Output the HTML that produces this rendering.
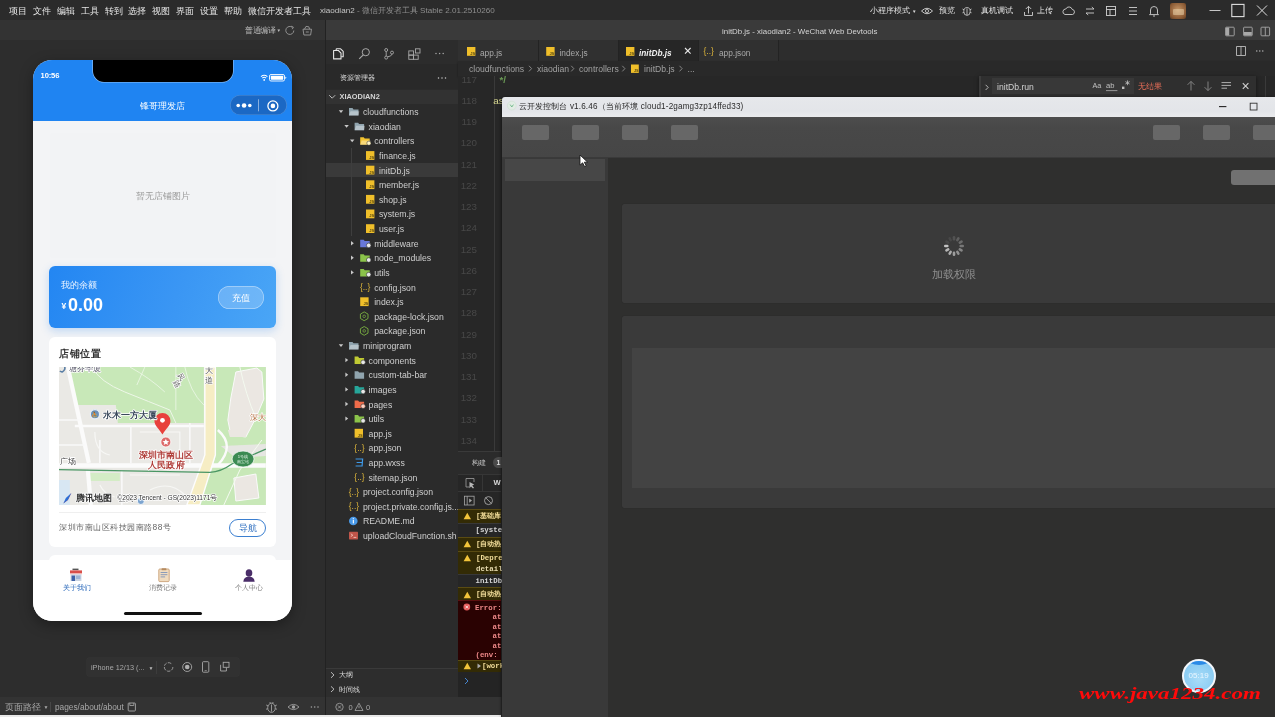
<!DOCTYPE html>
<html><head><meta charset="utf-8">
<style>
*{box-sizing:border-box;margin:0;padding:0}
html,body{width:1275px;height:717px;overflow:hidden;background:#2c2c2c;font-family:"Liberation Sans",sans-serif;color:#ccc}
.a{position:absolute}
.t{position:absolute;white-space:nowrap;line-height:12px}
svg{position:absolute;overflow:visible}
.m{position:absolute;white-space:nowrap;line-height:12px;font-family:"Liberation Mono",monospace;font-weight:bold;font-size:7.4px}
</style></head><body><div style="position:absolute;left:0;top:0;width:1275px;height:717px;overflow:hidden;will-change:transform">
<!-- MENU BAR -->
<div class="a" style="left:0;top:0;width:1275px;height:20px;background:#2b2b2b"></div>
<div class="t" style="left:9px;top:5px;font-size:9px;color:#e6e6e6;word-spacing:0">
<span style="margin-right:6px">项目</span><span style="margin-right:6px">文件</span><span style="margin-right:6px">编辑</span><span style="margin-right:6px">工具</span><span style="margin-right:5px">转到</span><span style="margin-right:6px">选择</span><span style="margin-right:6px">视图</span><span style="margin-right:6px">界面</span><span style="margin-right:6px">设置</span><span style="margin-right:6px">帮助</span><span>微信开发者工具</span></div>
<div class="t" style="left:320px;top:5px;font-size:8.1px;color:#8e8e8e"><span style="color:#c4c4c4">xiaodian2</span> - 微信开发者工具 Stable 2.01.2510260</div>

<!-- SIMULATOR PANEL -->
<div id="sim" class="a" style="left:0;top:20px;width:325px;height:695px;background:#2d2d2d"></div>
<div class="a" style="left:0;top:20px;width:325px;height:20px;background:#333"></div>
<div class="t" style="left:245px;top:25px;font-size:7.5px;color:#bbb;letter-spacing:-0.5px">普通编译</div><div class="t" style="left:276.5px;top:25px;font-size:4.5px;color:#bbb">▼</div>
<div class="a" style="left:325px;top:20px;width:1px;height:695px;background:#222"></div>
<div class="a" style="left:0;top:697px;width:325px;height:18px;background:#333"></div>
<div class="a" style="left:0;top:715px;width:501px;height:2px;background:#e9e9e9"></div>



<!-- sim toolbar icons -->
<svg style="left:284px;top:24px" width="30" height="13" viewBox="0 0 30 13">
 <path d="M9.8,6.5 A4,4 0 1 1 8.4,3.4" stroke="#9a9a9a" stroke-width="0.9" fill="none"/>
 <path d="M7.2,2.2 L9.4,3.2 L8.2,5.2" stroke="#9a9a9a" stroke-width="0.9" fill="none"/>
 <path d="M19,5.2 L27.5,5.2 L26.6,11 L19.9,11 Z M20.5,5.2 L22,2.4 L24.8,2.8 L25.6,5.2 M21.8,8 L24.8,8" stroke="#9a9a9a" stroke-width="0.9" fill="none"/>
</svg>
<!-- device pill -->
<div class="a" style="left:86.5px;top:658.4px;width:152px;height:17.5px;border-radius:2px;background:#313131;box-shadow:0 0 0 0.5px #363636"></div>
<div class="t" style="left:91px;top:662px;font-size:7.3px;line-height:12px;color:#a8a8a8">iPhone 12/13 (...</div>
<div class="t" style="left:148.5px;top:662px;font-size:5px;line-height:12px;color:#bbb">▼</div>
<div class="a" style="left:155.5px;top:661px;width:0.8px;height:13px;background:#3c3c3c"></div>
<svg style="left:160px;top:659px" width="75" height="16" viewBox="0 0 75 16">
 <path d="M12.9,8 A4.3,4.3 0 1 1 11.6,4.9" stroke="#a0a0a0" stroke-width="0.9" fill="none" stroke-dasharray="3.5 1.2"/>
 <circle cx="27.2" cy="8" r="4.5" stroke="#a8a8a8" stroke-width="0.9" fill="none"/>
 <circle cx="27.2" cy="8" r="2.3" fill="#b0b0b0"/>
 <rect x="42.5" y="2.7" width="6.3" height="10.5" rx="0.9" stroke="#a8a8a8" stroke-width="0.9" fill="none"/>
 <path d="M44.6,11.6 L46.8,11.6" stroke="#a8a8a8" stroke-width="0.7"/>
 <rect x="63.2" y="3.3" width="5.8" height="5" stroke="#a8a8a8" stroke-width="0.9" fill="none"/>
 <path d="M60.6,5.8 L60.6,12 L66.4,12 L66.4,8.6" stroke="#a8a8a8" stroke-width="0.9" fill="none"/>
</svg>
<!-- page path -->
<div class="t" style="left:5px;top:701px;font-size:8.5px;line-height:12px;color:#a8a8a8">页面路径 <span style="font-size:5px;position:relative;top:-1px">▼</span></div>
<div class="a" style="left:50px;top:702px;width:0.8px;height:10px;background:#484848"></div>
<div class="t" style="left:55px;top:701px;font-size:8.3px;line-height:12px;color:#a8a8a8">pages/about/about</div>
<svg style="left:127px;top:702px" width="10" height="10" viewBox="0 0 10 10"><rect x="1.2" y="1" width="7.2" height="8" rx="0.8" stroke="#a8a8a8" stroke-width="0.9" fill="none"/><path d="M2.8,1 L2.8,3.5 L6.8,3.5 L6.8,1" stroke="#a8a8a8" stroke-width="0.8" fill="none"/></svg>
<svg style="left:264px;top:700px" width="60" height="14" viewBox="0 0 60 14">
 <path d="M7.5,3.2 A3.8,4.6 0 0 1 11.3,7.8 A3.8,4.6 0 0 1 3.7,7.8 A3.8,4.6 0 0 1 7.5,3.2 Z M7.5,4.5 L7.5,11.6 M2.2,5 L4.2,6 M12.8,5 L10.8,6 M2,9.2 L3.9,8.8 M13,9.2 L11.1,8.8 M5.8,2 L6.5,3.3 M9.2,2 L8.5,3.3" stroke="#a0a0a0" stroke-width="0.9" fill="none"/>
 <path d="M24,7 Q29.5,1.8 35,7 Q29.5,12.2 24,7 Z" stroke="#a0a0a0" stroke-width="0.9" fill="none"/>
 <circle cx="29.5" cy="7" r="1.7" fill="#a0a0a0"/>
 <circle cx="47.4" cy="7" r="0.8" fill="#a0a0a0"/><circle cx="50.7" cy="7" r="0.8" fill="#a0a0a0"/><circle cx="54" cy="7" r="0.8" fill="#a0a0a0"/>
</svg>

<!-- PHONE -->
<div class="a" style="left:33px;top:60px;width:259px;height:561px;border-radius:19px;background:#f3f4f6;overflow:hidden;box-shadow:0 4px 14px rgba(0,0,0,0.35)">
 <div class="a" style="left:0;top:0;width:259px;height:60.5px;background:#1f84f2"></div>
 <div class="a" style="left:59.5px;top:-2px;width:140px;height:23.5px;background:#000;border-radius:0 0 11px 11px;box-shadow:0 0 0 0.6px rgba(255,255,255,0.5)"></div>
 <div class="t" style="left:7.6px;top:10.2px;font-size:7.6px;line-height:12px;color:#fff;font-weight:bold;letter-spacing:-0.15px">10:56</div>
 <svg style="left:227px;top:13.5px" width="30" height="8" viewBox="0 0 30 8">
  <path d="M1 2.6 Q4.2 0 7.4 2.6" stroke="#fff" stroke-width="1.1" fill="none"/>
  <path d="M2.3 4.1 Q4.2 2.4 6.1 4.1" stroke="#fff" stroke-width="1.1" fill="none"/>
  <circle cx="4.2" cy="5.9" r="0.9" fill="#fff"/>
  <rect x="9.5" y="0.5" width="15" height="6.5" rx="1.5" fill="none" stroke="#fff" stroke-width="0.9"/>
  <rect x="10.8" y="1.8" width="12.4" height="3.9" rx="0.6" fill="#fff"/>
  <path d="M25.3 2.4 L26.6 3.75 L25.3 5.1 Z" fill="#fff"/>
 </svg>
 <div class="t" style="left:0;top:40px;width:259px;text-align:center;font-size:8.8px;line-height:12px;color:#fff">锋哥理发店</div>
 <div class="a" style="left:197.4px;top:34.5px;width:56.7px;height:20.4px;border-radius:10.2px;background:#1b68c4;box-shadow:inset 0 0 0 0.6px rgba(255,255,255,0.25)"></div>
 <svg style="left:197.4px;top:34.5px" width="57" height="21" viewBox="0 0 57 21">
  <circle cx="8.2" cy="10.5" r="1.8" fill="#fff"/><circle cx="14.1" cy="10.5" r="2.3" fill="#fff"/><circle cx="19.8" cy="10.5" r="1.8" fill="#fff"/>
  <rect x="28.1" y="4.3" width="0.8" height="12" fill="rgba(255,255,255,0.6)"/>
  <circle cx="42.9" cy="10.9" r="5" fill="none" stroke="#fff" stroke-width="1.3"/>
  <circle cx="42.9" cy="10.9" r="2.3" fill="#fff"/>
 </svg>
 <!-- content -->
 <div class="a" style="left:17px;top:72.5px;width:226px;height:125px;background:#f2f3f5;border-radius:2px"></div>
 <div class="t" style="left:17px;top:130px;width:226px;text-align:center;font-size:8.5px;line-height:12px;color:#9a9a9a">暂无店铺图片</div>
 <div class="a" style="left:16px;top:206px;width:227px;height:62px;border-radius:6px;background:linear-gradient(110deg,#2386f2 0%,#3a96f4 55%,#4aa6f6 100%);box-shadow:0 3px 8px rgba(40,130,240,0.25)"></div>
 <div class="t" style="left:28px;top:219px;font-size:8.5px;line-height:12px;color:#eaf3ff">我的余额</div>
 <div class="t" style="left:28.5px;top:237px;font-size:8.5px;line-height:18px;color:#fff;font-weight:bold">¥</div>
 <div class="t" style="left:35px;top:235px;font-size:18px;line-height:20px;color:#fff;font-weight:bold">0.00</div>
 <div class="a" style="left:185px;top:226px;width:46px;height:23px;border-radius:11.5px;background:rgba(255,255,255,0.22);box-shadow:inset 0 0 0 0.7px rgba(255,255,255,0.45)"></div>
 <div class="t" style="left:185px;top:231.5px;width:46px;text-align:center;font-size:9px;line-height:12px;color:#fff">充值</div>
 <!-- map card -->
 <div class="a" style="left:16px;top:276.5px;width:227px;height:210.5px;border-radius:6px;background:#fff"></div>
 <div class="t" style="left:26px;top:287px;font-size:10.2px;line-height:14px;color:#333;font-weight:bold;letter-spacing:0.6px">店铺位置</div>
 <div id="map" class="a" style="left:26.3px;top:307px;width:206.7px;height:138px;background:#e9e9e7;overflow:hidden"><svg style="left:0;top:0" width="207" height="138" viewBox="59.3 367 206.7 138">
<rect x="59" y="367" width="208" height="139" fill="#eae9e5"/>
<path d="M70,367 L204,367 L204,423 L118,423 L116,405 L75,405 Z" fill="#c8e8b8"/>
<path d="M216,367 L266,367 L266,505 L196,505 L212,470 L216,455 Z" fill="#c8e8b8"/>
<path d="M90,473 L120,473 L120,481 L90,481 Z" fill="#d4ecc6"/>
<path d="M59,480 L70,480 L70,505 L59,505 Z" fill="#d8e7f3"/>
<path d="M236,372 L257,368 L262,372 L264,399 L256,418 L246,437 L231,435 L228,420 L231,398 Z" fill="#ebe7e2" stroke="#fafafa" stroke-width="1"/>
<path d="M234,478 L256,474 L259,498 L236,501 Z" fill="#ebe7e2" stroke="#fafafa" stroke-width="1"/>
<path d="M228,430 L246,429 L246,437 L230,437 Z" fill="#ebe7e2"/>
<path d="M221,446 L266,444 L266,456 L236,458 Z" fill="#e6e6e2"/>
<!-- park paths -->
<path d="M92,367 Q100,382 125,392 Q150,402 170,410 L176,423" stroke="#eef7e8" stroke-width="1" fill="none"/>
<path d="M130,367 Q150,378 165,392 M176,367 L176,410 M145,367 L137,385 M185,367 Q190,392 204,405" stroke="#eef7e8" stroke-width="0.8" fill="none"/>
<path d="M240,367 Q246,395 256,418 M224,505 L240,470 L262,440" stroke="#f4faf0" stroke-width="1" fill="none"/>
<!-- roads -->
<path d="M68,367 L89,463 M88,470 L91,505" stroke="#fbfbfb" stroke-width="4.2" fill="none"/>
<path d="M75,426 L204,426" stroke="#fbfbfb" stroke-width="2.6" fill="none"/>
<path d="M59,465.5 L266,465.5" stroke="#fbfbfb" stroke-width="4.5" fill="none"/>
<path d="M131,426 L131,463 M190,423 L190,463 M122,470 L122,505 M100,440 L100,463 M59,445 L85,445 M59,420 L80,420" stroke="#f9f9f9" stroke-width="1.6" fill="none"/>
<path d="M95,432 Q95,452 110,455 M140,432 L180,432 L180,455 M100,485 Q105,495 115,497 M130,475 L180,475 M150,490 Q170,480 185,495" stroke="#f7f7f5" stroke-width="1.2" fill="none"/>
<path d="M218,430 Q236,446 218,465" stroke="#fbfbfb" stroke-width="2.4" fill="none"/>
<path d="M205,367 L215.5,367 L215.5,455 L200,505 L187,505 L205,455 Z" fill="#f6edc4" stroke="#fdfdfd" stroke-width="1.4"/>
<!-- subway -->
<path d="M59,469.7 L210,472.3 Q221,472 232,464 L266,449" stroke="#4a9664" stroke-width="1.3" fill="none"/>
<ellipse cx="243.2" cy="459" rx="11" ry="8" fill="#3b8a52" stroke="#fff" stroke-width="0.7"/>
<text x="243.2" y="457.5" font-size="4.2" fill="#e8f5ea" text-anchor="middle" font-family="Liberation Sans">1号线</text>
<text x="243.2" y="463" font-size="4.2" fill="#e8f5ea" text-anchor="middle" font-family="Liberation Sans">南宝站</text>
<!-- pin & poi -->
<circle cx="166" cy="442" r="5" fill="#dc6a6a" stroke="#fff" stroke-width="0.8"/>
<path d="M166,438.8 L167,441 L169.3,441.2 L167.5,442.7 L168.1,445 L166,443.7 L163.9,445 L164.5,442.7 L162.7,441.2 L165,441 Z" fill="#fff"/>
<path d="M162.6,434.5 C159,428.5 154.6,425.5 154.6,421 A8,8 0 0 1 170.6,421 C170.6,425.5 166.2,428.5 162.6,434.5 Z" fill="#e8413c"/>
<circle cx="162.6" cy="420.3" r="2.4" fill="#fff"/>
<g font-family="Liberation Sans" paint-order="stroke" stroke="#fff" stroke-width="1.6" stroke-linejoin="round">
<text x="166" y="457.8" font-size="9.4" font-weight="bold" fill="#b03e3a" text-anchor="middle">深圳市南山区</text>
<text x="166.4" y="468" font-size="9.2" font-weight="bold" fill="#b03e3a" text-anchor="middle" letter-spacing="0.3">人民政府</text>
<text x="103" y="417.6" font-size="8.9" font-weight="bold" fill="#3b4a5c">水木一方大厦</text>
<text x="60" y="464.4" font-size="8.2" fill="#454545">广场</text>
<text x="250.5" y="419.6" font-size="7.8" fill="#b36d3d">深大</text>
<text x="205" y="372.8" font-size="7.6" fill="#555">大</text>
<text x="205" y="382.7" font-size="7.6" fill="#555">道</text>
<text x="69" y="370.5" font-size="7.6" fill="#556">塘芬华厦</text>
<text x="0" y="0" font-size="7.4" fill="#666" transform="translate(177,375) rotate(62)">风</text>
<text x="0" y="0" font-size="7.4" fill="#666" transform="translate(173,382) rotate(62)">路</text>
<text x="118" y="501" font-size="8" fill="#444">公寓</text>
</g>
<circle cx="95.1" cy="414.2" r="4.6" fill="#6a8fb8" stroke="#e8f0f8" stroke-width="1.2"/>
<text x="95.1" y="416.6" font-size="6" fill="#fff" text-anchor="middle" font-family="Liberation Sans">⛹</text>
<path d="M60,371 Q63,373.5 65,369 L65,367" stroke="#5b7fa5" stroke-width="1.6" fill="none"/>
<circle cx="141" cy="501" r="3.5" fill="#7ca4cf" stroke="#fff" stroke-width="0.8"/>
<!-- logo -->
<path d="M63.5,503.5 L71.5,493 L68,500 Z" fill="#e8403c"/>
<path d="M63.5,503.5 L68,500 L71.5,493 L66,498 Z" fill="#2b6fd6"/>
<g font-family="Liberation Sans" paint-order="stroke" stroke="#fff" stroke-width="1.6" stroke-linejoin="round">
<text x="75.7" y="500.6" font-size="9.4" font-weight="bold" fill="#333">腾讯地图</text>
<text x="117.5" y="500" font-size="6.6" fill="#333">©2023 Tencent - GS(2023)1171号</text>
</g>
</svg></div>
 <div class="a" style="left:26px;top:452px;width:207px;height:1px;background:#efefef"></div>
 <div class="t" style="left:26px;top:461px;font-size:8.4px;line-height:12px;color:#666;letter-spacing:0.5px">深圳市南山区科技园南路88号</div>
 <div class="a" style="left:196px;top:459px;width:37px;height:18px;border-radius:9px;border:1px solid #3b7fd0"></div>
 <div class="t" style="left:196px;top:462px;width:37px;text-align:center;font-size:8.8px;line-height:12px;color:#2f6fc0">导航</div>
 <div class="a" style="left:16px;top:495px;width:227px;height:30px;border-radius:6px;background:#fff"></div>
 <!-- tabbar -->
 <div class="a" style="left:0;top:500px;width:259px;height:61px;background:#fff"></div>
 <div class="t" style="left:13.5px;top:522.4px;width:60px;text-align:center;font-size:7.4px;line-height:12px;color:#2f6cbc">关于我们</div>
 <div class="t" style="left:99.7px;top:522.4px;width:60px;text-align:center;font-size:7.4px;line-height:12px;color:#7a7a7a">消费记录</div>
 <div class="t" style="left:186px;top:522.4px;width:60px;text-align:center;font-size:7.4px;line-height:12px;color:#7a7a7a">个人中心</div>
 <svg style="left:36px;top:508px" width="14" height="14" viewBox="0 0 14 14">
  <rect x="3.5" y="0.6" width="6" height="1.6" fill="#555"/>
  <rect x="1" y="2.4" width="12" height="3" fill="#d94f4a"/>
  <rect x="1.2" y="5.4" width="11.6" height="1" fill="#f3b0ad"/>
  <rect x="1.6" y="6.4" width="10.8" height="6.6" fill="#c9d3e2"/>
  <rect x="2.6" y="7.6" width="3.4" height="5.4" fill="#3f62a8"/>
  <rect x="7" y="7.6" width="4.4" height="3.4" fill="#9fb4d6"/>
 </svg>
 <svg style="left:124.6px;top:508.4px" width="12" height="14" viewBox="0 0 12 14">
  <rect x="0.8" y="1" width="10.4" height="12.6" rx="1" fill="#f0dcc0" stroke="#c9a077" stroke-width="0.9"/>
  <rect x="3.6" y="0.2" width="4.8" height="2" rx="0.5" fill="#b58a60"/>
  <rect x="2.6" y="4" width="6.8" height="1" fill="#8a9bb8"/>
  <rect x="2.6" y="6.2" width="6.8" height="1" fill="#8a9bb8"/>
  <rect x="2.6" y="8.4" width="4.5" height="1" fill="#8a9bb8"/>
 </svg>
 <svg style="left:210px;top:509px" width="12" height="13" viewBox="0 0 12 13">
  <ellipse cx="6" cy="4" rx="3.3" ry="3.8" fill="#4a2d68"/>
  <path d="M0.3,12.8 Q0.8,7.6 6,7.8 Q11.2,7.6 11.7,12.8 Z" fill="#4a2d68"/>
 </svg>
 <div class="a" style="left:91px;top:551.5px;width:78px;height:3px;border-radius:2px;background:#111"></div>
</div>

<!-- RIGHT COLUMN -->
<div class="a" style="left:326px;top:20px;width:949px;height:20px;background:#3a3a3a"></div>
<div class="t" style="left:722px;top:26.2px;font-size:7.9px;color:#d4d4d4">initDb.js - xiaodian2 - WeChat Web Devtools</div>
<!-- explorer -->
<div class="a" style="left:326px;top:40px;width:132px;height:657px;background:#2b2b2b"></div>
<!-- top right toolbar -->
<div class="t" style="left:870px;top:5px;font-size:8.1px;color:#e0e0e0">小程序模式</div><div class="t" style="left:912px;top:5.5px;font-size:4.5px;color:#ddd">▼</div>
<div class="t" style="left:939px;top:5px;font-size:8.1px;color:#e0e0e0">预览</div>
<div class="t" style="left:981px;top:5px;font-size:8.1px;color:#e0e0e0">真机调试</div>
<div class="t" style="left:1037px;top:5px;font-size:8.1px;color:#e0e0e0">上传</div>
<svg style="left:0;top:0" width="1275" height="40">
 <path d="M921.5,11 Q927,5.5 932.5,11 Q927,16.5 921.5,11 Z" stroke="#d8d8d8" stroke-width="0.9" fill="none"/><circle cx="927" cy="11" r="1.6" stroke="#d8d8d8" stroke-width="0.8" fill="none"/>
 <path d="M967,7.6 A3.2,3.8 0 0 1 970.2,11.6 A3.2,3.8 0 0 1 963.8,11.6 A3.2,3.8 0 0 1 967,7.6 Z M967,8.6 L967,15 M962.5,9 L964,9.8 M971.5,9 L970,9.8 M962.5,12.8 L963.8,12.4 M971.5,12.8 L970.2,12.4" stroke="#d8d8d8" stroke-width="0.8" fill="none"/>
 <path d="M1028.5,6.5 L1028.5,13.5 M1025.8,9 L1028.5,6.3 L1031.2,9 M1024.5,12 L1024.5,15.5 L1032.5,15.5 L1032.5,12" stroke="#d8d8d8" stroke-width="0.85" fill="none"/>
 <path d="M1065,14.5 L1072.5,14.5 A2.6,2.6 0 0 0 1072.2,9.4 A3.4,3.4 0 0 0 1065.8,9 A2.8,2.8 0 0 0 1065,14.5 Z" stroke="#d0d0d0" stroke-width="0.9" fill="none"/>
 <path d="M1086,9 L1094,9 M1091.8,7 L1094,9 M1094,13 L1086,13 M1088.2,15 L1086,13" stroke="#d0d0d0" stroke-width="0.9" fill="none"/>
 <rect x="1106.5" y="6.5" width="9" height="9" stroke="#d0d0d0" stroke-width="0.9" fill="none"/><path d="M1106.5,9.5 L1115.5,9.5 M1110,9.5 L1110,15.5" stroke="#d0d0d0" stroke-width="0.9"/>
 <path d="M1129,7.5 L1137,7.5 M1129,11 L1137,11 M1129,14.5 L1137,14.5" stroke="#d0d0d0" stroke-width="0.9"/>
 <path d="M1150.5,13.8 L1150.5,10 A3.5,3.5 0 0 1 1157.5,10 L1157.5,13.8 L1158.5,14.6 L1149.5,14.6 Z M1153,16 L1155,16" stroke="#d0d0d0" stroke-width="0.9" fill="none"/>
 <path d="M1209.5,10.5 L1220.5,10.5" stroke="#d8d8d8" stroke-width="0.9"/>
 <rect x="1231.8" y="4.4" width="12.2" height="12.2" stroke="#e0e0e0" stroke-width="1.1" fill="none"/>
 <path d="M1257,5.5 L1267,15.5 M1267,5.5 L1257,15.5" stroke="#e0e0e0" stroke-width="1"/>
 <rect x="1225.6" y="27.2" width="8.6" height="8.6" rx="0.8" stroke="#a8a8a8" stroke-width="0.9" fill="none"/><rect x="1226" y="27.6" width="3.2" height="7.8" fill="#a8a8a8"/>
 <rect x="1243.6" y="27.2" width="8.6" height="8.6" rx="0.8" stroke="#a8a8a8" stroke-width="0.9" fill="none"/><rect x="1244" y="32" width="7.8" height="3.4" fill="#a8a8a8"/>
 <rect x="1261" y="27.2" width="8.6" height="8.6" rx="0.8" stroke="#a8a8a8" stroke-width="0.9" fill="none"/><path d="M1265.3,27.2 L1265.3,35.8" stroke="#a8a8a8" stroke-width="0.9"/>
</svg>
<div class="a" style="left:1170px;top:3px;width:16px;height:16px;border-radius:2px;background:radial-gradient(circle at 50% 45%,#c89868,#8a5a34 70%,#5a3a20)"></div>
<div class="a" style="left:1172.5px;top:9px;width:11px;height:6px;background:#e8d0a8;opacity:0.55;border-radius:1px"></div>

<!-- status -->
<div class="a" style="left:326px;top:697px;width:175px;height:18px;background:#333"></div>
<!-- EXPLORER -->
<div class="a" style="left:326px;top:40px;width:132px;height:24px;background:#2c2c2c"></div>
<div class="a" style="left:326px;top:64px;width:132px;height:25px;background:#292929"></div>
<svg style="left:326px;top:40px" width="132" height="24" viewBox="0 0 132 24">
 <path d="M10.2,8.8 L14.6,8.8 L17.2,11.4 L17.2,16.8 L15.2,16.8" stroke="#e6e6e6" stroke-width="1.1" fill="none" stroke-linejoin="round"/>
 <path d="M7.6,10.5 L12.4,10.5 L15,13.1 L15,18.9 L7.6,18.9 Z" stroke="#e6e6e6" stroke-width="1.1" fill="#2c2c2c" stroke-linejoin="round"/>
 <path d="M10.2,8.8 L10.2,10.5" stroke="#e6e6e6" stroke-width="1.1"/>
 <circle cx="39.8" cy="12.2" r="3.6" stroke="#a8a8a8" stroke-width="1" fill="none"/>
 <path d="M37.3,14.8 L33.2,18.9" stroke="#a8a8a8" stroke-width="1.1"/>
 <circle cx="60.2" cy="10" r="1.5" stroke="#a8a8a8" stroke-width="0.9" fill="none"/>
 <circle cx="60.2" cy="17.6" r="1.5" stroke="#a8a8a8" stroke-width="0.9" fill="none"/>
 <circle cx="66" cy="12.6" r="1.5" stroke="#a8a8a8" stroke-width="0.9" fill="none"/>
 <path d="M60.2,11.5 L60.2,16.1 M66,14.1 Q65.5,16.5 61.5,16.8" stroke="#a8a8a8" stroke-width="0.9" fill="none"/>
 <rect x="82.8" y="10.9" width="4.7" height="4.2" stroke="#a8a8a8" stroke-width="0.9" fill="none"/>
 <rect x="82.8" y="15.1" width="4.7" height="4.2" stroke="#a8a8a8" stroke-width="0.9" fill="none"/>
 <rect x="87.5" y="15.1" width="4.7" height="4.2" stroke="#a8a8a8" stroke-width="0.9" fill="none"/>
 <rect x="89.5" y="8.8" width="4.5" height="4.2" stroke="#a8a8a8" stroke-width="0.9" fill="none"/>
 <circle cx="110" cy="13.4" r="0.75" fill="#a8a8a8"/><circle cx="113.6" cy="13.4" r="0.75" fill="#a8a8a8"/><circle cx="117.2" cy="13.4" r="0.75" fill="#a8a8a8"/>
</svg>
<div class="t" style="left:339.5px;top:71.8px;font-size:7.2px;line-height:12px;color:#dcdcdc">资源管理器</div>
<svg style="left:436px;top:75px" width="12" height="6"><circle cx="2.5" cy="3" r="0.75" fill="#c8c8c8"/><circle cx="6" cy="3" r="0.75" fill="#c8c8c8"/><circle cx="9.5" cy="3" r="0.75" fill="#c8c8c8"/></svg>
<div class="a" style="left:326px;top:89.5px;width:132px;height:14.6px;background:#323232"></div>
<svg style="left:328px;top:93px" width="10" height="8"><path d="M1.2,2.2 L4.2,5.2 L7.2,2.2" stroke="#c8c8c8" stroke-width="0.9" fill="none"/></svg>
<div class="t" style="left:339.5px;top:91px;font-size:7.4px;line-height:12px;color:#d4d4d4;font-weight:bold">XIAODIAN2</div>
<div class="a" style="left:326px;top:162.78px;width:132px;height:14.6px;background:#3a3a3a"></div>
<div class="a" style="left:351px;top:148px;width:0.7px;height:88px;background:#3e3e3e"></div>
<div class="t" style="left:363.0px;top:106.10px;font-size:8.7px;line-height:12px;color:#cfcfcf">cloudfunctions</div>
<div class="t" style="left:368.6px;top:120.72px;font-size:8.7px;line-height:12px;color:#cfcfcf">xiaodian</div>
<div class="t" style="left:374.2px;top:135.34px;font-size:8.7px;line-height:12px;color:#cfcfcf">controllers</div>
<div class="t" style="left:379.0px;top:149.96px;font-size:8.7px;line-height:12px;color:#cfcfcf">finance.js</div>
<div class="t" style="left:379.0px;top:164.58px;font-size:8.7px;line-height:12px;color:#cfcfcf">initDb.js</div>
<div class="t" style="left:379.0px;top:179.20px;font-size:8.7px;line-height:12px;color:#cfcfcf">member.js</div>
<div class="t" style="left:379.0px;top:193.82px;font-size:8.7px;line-height:12px;color:#cfcfcf">shop.js</div>
<div class="t" style="left:379.0px;top:208.44px;font-size:8.7px;line-height:12px;color:#cfcfcf">system.js</div>
<div class="t" style="left:379.0px;top:223.06px;font-size:8.7px;line-height:12px;color:#cfcfcf">user.js</div>
<div class="t" style="left:374.2px;top:237.68px;font-size:8.7px;line-height:12px;color:#cfcfcf">middleware</div>
<div class="t" style="left:374.2px;top:252.30px;font-size:8.7px;line-height:12px;color:#cfcfcf">node_modules</div>
<div class="t" style="left:374.2px;top:266.92px;font-size:8.7px;line-height:12px;color:#cfcfcf">utils</div>
<div class="t" style="left:374.2px;top:281.54px;font-size:8.7px;line-height:12px;color:#cfcfcf">config.json</div>
<div class="t" style="left:374.2px;top:296.16px;font-size:8.7px;line-height:12px;color:#cfcfcf">index.js</div>
<div class="t" style="left:374.2px;top:310.78px;font-size:8.7px;line-height:12px;color:#cfcfcf">package-lock.json</div>
<div class="t" style="left:374.2px;top:325.40px;font-size:8.7px;line-height:12px;color:#cfcfcf">package.json</div>
<div class="t" style="left:363.0px;top:340.02px;font-size:8.7px;line-height:12px;color:#cfcfcf">miniprogram</div>
<div class="t" style="left:368.6px;top:354.64px;font-size:8.7px;line-height:12px;color:#cfcfcf">components</div>
<div class="t" style="left:368.6px;top:369.26px;font-size:8.7px;line-height:12px;color:#cfcfcf">custom-tab-bar</div>
<div class="t" style="left:368.6px;top:383.88px;font-size:8.7px;line-height:12px;color:#cfcfcf">images</div>
<div class="t" style="left:368.6px;top:398.50px;font-size:8.7px;line-height:12px;color:#cfcfcf">pages</div>
<div class="t" style="left:368.6px;top:413.12px;font-size:8.7px;line-height:12px;color:#cfcfcf">utils</div>
<div class="t" style="left:368.6px;top:427.74px;font-size:8.7px;line-height:12px;color:#cfcfcf">app.js</div>
<div class="t" style="left:368.6px;top:442.36px;font-size:8.7px;line-height:12px;color:#cfcfcf">app.json</div>
<div class="t" style="left:368.6px;top:456.98px;font-size:8.7px;line-height:12px;color:#cfcfcf">app.wxss</div>
<div class="t" style="left:368.6px;top:471.60px;font-size:8.7px;line-height:12px;color:#cfcfcf">sitemap.json</div>
<div class="t" style="left:363.0px;top:486.22px;font-size:8.7px;line-height:12px;color:#cfcfcf">project.config.json</div>
<div class="t" style="left:363.0px;top:500.84px;font-size:8.7px;line-height:12px;color:#cfcfcf">project.private.config.js...</div>
<div class="t" style="left:363.0px;top:515.46px;font-size:8.7px;line-height:12px;color:#cfcfcf">README.md</div>
<div class="t" style="left:363.0px;top:530.08px;font-size:8.7px;line-height:12px;color:#cfcfcf">uploadCloudFunction.sh</div>
<svg style="left:0;top:0" width="1275" height="717"><path d="M338.8,110.3 L343.2,110.3 L341.0,113.1 Z" fill="#c8c8c8"/><path d="M349.0,108.1 L352.5,108.1 L353.5,109.4 L358.5,109.4 L358.5,115.6 L349.0,115.6 Z" fill="#90a4ae"/><path d="M350.5,111.2 L359.3,111.2 L358.5,115.6 L349.0,115.6 Z" fill="rgba(255,255,255,0.35)"/><path d="M344.4,124.9 L348.8,124.9 L346.6,127.7 Z" fill="#c8c8c8"/><path d="M354.6,122.7 L358.1,122.7 L359.1,124.0 L364.1,124.0 L364.1,130.2 L354.6,130.2 Z" fill="#90a4ae"/><path d="M356.1,125.8 L364.9,125.8 L364.1,130.2 L354.6,130.2 Z" fill="rgba(255,255,255,0.35)"/><path d="M350.0,139.5 L354.4,139.5 L352.2,142.3 Z" fill="#c8c8c8"/><path d="M360.2,137.3 L363.7,137.3 L364.7,138.6 L369.7,138.6 L369.7,144.8 L360.2,144.8 Z" fill="#f4c430"/><path d="M361.7,140.4 L370.5,140.4 L369.7,144.8 L360.2,144.8 Z" fill="rgba(255,255,255,0.35)"/><circle cx="368.9" cy="143.2" r="2.1" fill="#fff3c4" stroke="#2b2b2b" stroke-width="0.5"/><rect x="366.0" y="151.1" width="8.4" height="8.8" fill="#f0bf2a"/><text x="369.2" y="159.0" font-size="4" font-weight="bold" fill="#5a4a10" font-family="Liberation Sans">JS</text><rect x="366.0" y="165.7" width="8.4" height="8.8" fill="#f0bf2a"/><text x="369.2" y="173.6" font-size="4" font-weight="bold" fill="#5a4a10" font-family="Liberation Sans">JS</text><rect x="366.0" y="180.3" width="8.4" height="8.8" fill="#f0bf2a"/><text x="369.2" y="188.2" font-size="4" font-weight="bold" fill="#5a4a10" font-family="Liberation Sans">JS</text><rect x="366.0" y="194.9" width="8.4" height="8.8" fill="#f0bf2a"/><text x="369.2" y="202.8" font-size="4" font-weight="bold" fill="#5a4a10" font-family="Liberation Sans">JS</text><rect x="366.0" y="209.5" width="8.4" height="8.8" fill="#f0bf2a"/><text x="369.2" y="217.4" font-size="4" font-weight="bold" fill="#5a4a10" font-family="Liberation Sans">JS</text><rect x="366.0" y="224.2" width="8.4" height="8.8" fill="#f0bf2a"/><text x="369.2" y="232.1" font-size="4" font-weight="bold" fill="#5a4a10" font-family="Liberation Sans">JS</text><path d="M351.0,241.0 L353.8,243.2 L351.0,245.4 Z" fill="#c8c8c8"/><path d="M360.2,239.7 L363.7,239.7 L364.7,241.0 L369.7,241.0 L369.7,247.2 L360.2,247.2 Z" fill="#6877d8"/><circle cx="368.7" cy="245.4" r="2.3" fill="#e8e8e8" stroke="#2b2b2b" stroke-width="0.6"/><path d="M351.0,255.6 L353.8,257.8 L351.0,260.0 Z" fill="#c8c8c8"/><path d="M360.2,254.3 L363.7,254.3 L364.7,255.6 L369.7,255.6 L369.7,261.8 L360.2,261.8 Z" fill="#8bc34a"/><circle cx="368.7" cy="260.0" r="2.3" fill="#e8e8e8" stroke="#2b2b2b" stroke-width="0.6"/><path d="M351.0,270.2 L353.8,272.4 L351.0,274.6 Z" fill="#c8c8c8"/><path d="M360.2,268.9 L363.7,268.9 L364.7,270.2 L369.7,270.2 L369.7,276.4 L360.2,276.4 Z" fill="#8bc34a"/><circle cx="368.7" cy="274.6" r="2.3" fill="#e8e8e8" stroke="#2b2b2b" stroke-width="0.6"/><text x="359.9" y="290.0" font-size="8.5" fill="#e2b93b" font-family="Liberation Sans">{..}</text><rect x="360.2" y="297.3" width="8.4" height="8.8" fill="#f0bf2a"/><text x="363.4" y="305.2" font-size="4" font-weight="bold" fill="#5a4a10" font-family="Liberation Sans">JS</text><path d="M364.2,311.9 l3.8,2.2 l0,4.4 l-3.8,2.2 l-3.8,-2.2 l0,-4.4 Z" stroke="#7cb342" stroke-width="0.9" fill="none"/><circle cx="364.2" cy="316.3" r="1.3" stroke="#7cb342" stroke-width="0.7" fill="none"/><path d="M364.2,326.5 l3.8,2.2 l0,4.4 l-3.8,2.2 l-3.8,-2.2 l0,-4.4 Z" stroke="#7cb342" stroke-width="0.9" fill="none"/><circle cx="364.2" cy="330.9" r="1.3" stroke="#7cb342" stroke-width="0.7" fill="none"/><path d="M338.8,344.2 L343.2,344.2 L341.0,347.0 Z" fill="#c8c8c8"/><path d="M349.0,342.0 L352.5,342.0 L353.5,343.3 L358.5,343.3 L358.5,349.5 L349.0,349.5 Z" fill="#90a4ae"/><path d="M350.5,345.1 L359.3,345.1 L358.5,349.5 L349.0,349.5 Z" fill="rgba(255,255,255,0.35)"/><path d="M345.4,357.9 L348.2,360.1 L345.4,362.3 Z" fill="#c8c8c8"/><path d="M354.6,356.6 L358.1,356.6 L359.1,357.9 L364.1,357.9 L364.1,364.1 L354.6,364.1 Z" fill="#c0ca33"/><circle cx="363.1" cy="362.3" r="2.3" fill="#e8e8e8" stroke="#2b2b2b" stroke-width="0.6"/><path d="M345.4,372.6 L348.2,374.8 L345.4,377.0 Z" fill="#c8c8c8"/><path d="M354.6,371.3 L358.1,371.3 L359.1,372.6 L364.1,372.6 L364.1,378.8 L354.6,378.8 Z" fill="#90a4ae"/><path d="M345.4,387.2 L348.2,389.4 L345.4,391.6 Z" fill="#c8c8c8"/><path d="M354.6,385.9 L358.1,385.9 L359.1,387.2 L364.1,387.2 L364.1,393.4 L354.6,393.4 Z" fill="#26a69a"/><circle cx="363.1" cy="391.6" r="2.3" fill="#e8e8e8" stroke="#2b2b2b" stroke-width="0.6"/><path d="M345.4,401.8 L348.2,404.0 L345.4,406.2 Z" fill="#c8c8c8"/><path d="M354.6,400.5 L358.1,400.5 L359.1,401.8 L364.1,401.8 L364.1,408.0 L354.6,408.0 Z" fill="#ef6c4a"/><circle cx="363.1" cy="406.2" r="2.3" fill="#ffd0c0" stroke="#2b2b2b" stroke-width="0.6"/><path d="M345.4,416.4 L348.2,418.6 L345.4,420.8 Z" fill="#c8c8c8"/><path d="M354.6,415.1 L358.1,415.1 L359.1,416.4 L364.1,416.4 L364.1,422.6 L354.6,422.6 Z" fill="#8bc34a"/><circle cx="363.1" cy="420.8" r="2.3" fill="#e8e8e8" stroke="#2b2b2b" stroke-width="0.6"/><rect x="354.6" y="428.8" width="8.4" height="8.8" fill="#f0bf2a"/><text x="357.8" y="436.7" font-size="4" font-weight="bold" fill="#5a4a10" font-family="Liberation Sans">JS</text><text x="354.3" y="450.9" font-size="8.5" fill="#e2b93b" font-family="Liberation Sans">{..}</text><path d="M355.6,459.0 L362.6,459.0 L362.1,466.0 L355.6,466.0 M356.6,462.5 L362.1,462.5 M354.6,459.0 L354.6,459.0 L354.6,459.0 L354.6,459.0" stroke="#3f9ae8" stroke-width="1.2" fill="none"/><text x="354.3" y="480.1" font-size="8.5" fill="#e2b93b" font-family="Liberation Sans">{..}</text><text x="348.7" y="494.7" font-size="8.5" fill="#e2b93b" font-family="Liberation Sans">{..}</text><text x="348.7" y="509.3" font-size="8.5" fill="#e2b93b" font-family="Liberation Sans">{..}</text><circle cx="353.3" cy="521.0" r="4.3" fill="#4a9ae8"/><rect x="352.8" y="519.8" width="1.1" height="3.6" fill="#fff"/><circle cx="353.3" cy="518.6" r="0.6" fill="#fff"/><rect x="349.0" y="531.8" width="9" height="7.6" fill="#c0554a" rx="0.6"/><path d="M350.8,533.8 l2,1.4 l-2,1.4 M353.5,537.4 l2.8,0" stroke="#f6d0c8" stroke-width="0.8" fill="none"/></svg>
<div class="a" style="left:326px;top:667.5px;width:132px;height:1px;background:#3a3a3a"></div>
<div class="a" style="left:326px;top:668.5px;width:132px;height:28.5px;background:#2d2d2d"></div>
<svg style="left:328px;top:668px" width="10" height="28"><path d="M3,4.2 L6,7 L3,9.8 M3,18.4 L6,21.2 L3,24" stroke="#c8c8c8" stroke-width="0.9" fill="none"/></svg>
<div class="t" style="left:339px;top:669px;font-size:7.2px;line-height:12px;color:#dcdcdc">大纲</div>
<div class="t" style="left:339px;top:683.6px;font-size:7.2px;line-height:12px;color:#dcdcdc">时间线</div>
<svg style="left:334px;top:700px" width="40" height="14"><circle cx="5.5" cy="7" r="3.7" stroke="#a8a8a8" stroke-width="0.8" fill="none"/><path d="M4,5.5 L7,8.5 M7,5.5 L4,8.5" stroke="#a8a8a8" stroke-width="0.8"/><path d="M25,3.2 L29,10.5 L21,10.5 Z M25,5.8 L25,8.2" stroke="#a8a8a8" stroke-width="0.8" fill="none"/></svg>
<div class="t" style="left:348.5px;top:701.5px;font-size:7.5px;line-height:12px;color:#a8a8a8">0</div>
<div class="t" style="left:366px;top:701.5px;font-size:7.5px;line-height:12px;color:#a8a8a8">0</div>
<!-- editor -->
<div class="a" style="left:458px;top:40px;width:817px;height:21px;background:#2d2d2d"></div>
<div class="a" style="left:458px;top:40px;width:80px;height:21px;background:#303030"></div>
<div class="a" style="left:538.5px;top:40px;width:79px;height:21px;background:#303030"></div>
<div class="a" style="left:618px;top:40px;width:80px;height:21px;background:#262626"></div>
<div class="a" style="left:698.5px;top:40px;width:79px;height:21px;background:#303030"></div>
<div class="a" style="left:538px;top:40px;width:0.6px;height:21px;background:#232323"></div>
<div class="a" style="left:617.6px;top:40px;width:0.6px;height:21px;background:#232323"></div>
<div class="a" style="left:698px;top:40px;width:0.6px;height:21px;background:#232323"></div>
<div class="a" style="left:777.5px;top:40px;width:0.6px;height:21px;background:#232323"></div>

<div class="t" style="left:480px;top:47.4px;font-size:8.3px;line-height:12px;color:#a9a9a9">app.js</div>
<div class="t" style="left:559.5px;top:47.4px;font-size:8.3px;line-height:12px;color:#a9a9a9">index.js</div>
<div class="t" style="left:639px;top:47.4px;font-size:8.3px;line-height:12px;color:#f0f0f0;font-style:italic;font-weight:bold">initDb.js</div>
<div class="t" style="left:719px;top:47.4px;font-size:8.3px;line-height:12px;color:#a9a9a9">app.json</div>
<div class="a" style="left:458px;top:61px;width:817px;height:15px;background:#292929;box-shadow:0 1px 2px rgba(0,0,0,0.35)"></div>
<div class="t" style="left:469px;top:62.6px;font-size:8.65px;line-height:12px;color:#a0a0a0">cloudfunctions</div>
<div class="t" style="left:537px;top:62.6px;font-size:8.65px;line-height:12px;color:#a0a0a0">xiaodian</div>
<div class="t" style="left:579px;top:62.6px;font-size:8.65px;line-height:12px;color:#a0a0a0">controllers</div>
<div class="t" style="left:644px;top:62.6px;font-size:8.65px;line-height:12px;color:#a0a0a0">initDb.js</div>
<div class="t" style="left:687.5px;top:62.6px;font-size:8.65px;line-height:12px;color:#a0a0a0">...</div>
<div class="a" style="left:458px;top:76px;width:817px;height:375px;background:#272727"></div>
<svg style="left:0;top:0" width="1275" height="100">
 <rect x="467" y="47" width="8.4" height="8.8" fill="#f0bf2a"/><text x="470.2" y="54.9" font-size="4" font-weight="bold" fill="#5a4a10" font-family="Liberation Sans">JS</text>
 <rect x="546.2" y="47" width="8.4" height="8.8" fill="#f0bf2a"/><text x="549.4" y="54.9" font-size="4" font-weight="bold" fill="#5a4a10" font-family="Liberation Sans">JS</text>
 <rect x="626" y="47" width="8.4" height="8.8" fill="#f0bf2a"/><text x="629.2" y="54.9" font-size="4" font-weight="bold" fill="#5a4a10" font-family="Liberation Sans">JS</text>
 <text x="703.5" y="54.4" font-size="8.5" fill="#e2b93b" font-family="Liberation Sans">{..}</text>
 <path d="M685,48 L690.6,53.6 M690.6,48 L685,53.6" stroke="#e8e8e8" stroke-width="1.1"/>
 <rect x="631" y="64.5" width="7.8" height="8.4" fill="#f0bf2a"/><text x="634" y="72" font-size="3.8" font-weight="bold" fill="#5a4a10" font-family="Liberation Sans">JS</text>
 <path d="M529,65.8 L531.6,68.6 L529,71.4 M571.2,65.8 L573.8,68.6 L571.2,71.4 M622.3,65.8 L624.9,68.6 L622.3,71.4 M679.5,65.8 L682.1,68.6 L679.5,71.4" stroke="#9a9a9a" stroke-width="0.8" fill="none"/>
 <path d="M1236.5,46.5 L1245.5,46.5 L1245.5,55.5 L1236.5,55.5 Z M1241,46.5 L1241,55.5" stroke="#bdbdbd" stroke-width="0.9" fill="none"/>
 <circle cx="1256.8" cy="51" r="0.7" fill="#bdbdbd"/><circle cx="1259.8" cy="51" r="0.7" fill="#bdbdbd"/><circle cx="1262.8" cy="51" r="0.7" fill="#bdbdbd"/>
</svg>
<div class="a" style="left:494px;top:76px;width:0.7px;height:375px;background:#3a3a3a"></div>
<div class="t" style="left:447px;top:73.70px;width:30px;text-align:right;font-size:9.8px;line-height:12px;color:#484848">117</div>
<div class="t" style="left:447px;top:94.95px;width:30px;text-align:right;font-size:9.8px;line-height:12px;color:#484848">118</div>
<div class="t" style="left:447px;top:116.20px;width:30px;text-align:right;font-size:9.8px;line-height:12px;color:#484848">119</div>
<div class="t" style="left:447px;top:137.45px;width:30px;text-align:right;font-size:9.8px;line-height:12px;color:#484848">120</div>
<div class="t" style="left:447px;top:158.70px;width:30px;text-align:right;font-size:9.8px;line-height:12px;color:#484848">121</div>
<div class="t" style="left:447px;top:179.95px;width:30px;text-align:right;font-size:9.8px;line-height:12px;color:#484848">122</div>
<div class="t" style="left:447px;top:201.20px;width:30px;text-align:right;font-size:9.8px;line-height:12px;color:#484848">123</div>
<div class="t" style="left:447px;top:222.45px;width:30px;text-align:right;font-size:9.8px;line-height:12px;color:#484848">124</div>
<div class="t" style="left:447px;top:243.70px;width:30px;text-align:right;font-size:9.8px;line-height:12px;color:#484848">125</div>
<div class="t" style="left:447px;top:264.95px;width:30px;text-align:right;font-size:9.8px;line-height:12px;color:#484848">126</div>
<div class="t" style="left:447px;top:286.20px;width:30px;text-align:right;font-size:9.8px;line-height:12px;color:#484848">127</div>
<div class="t" style="left:447px;top:307.45px;width:30px;text-align:right;font-size:9.8px;line-height:12px;color:#484848">128</div>
<div class="t" style="left:447px;top:328.70px;width:30px;text-align:right;font-size:9.8px;line-height:12px;color:#484848">129</div>
<div class="t" style="left:447px;top:349.95px;width:30px;text-align:right;font-size:9.8px;line-height:12px;color:#484848">130</div>
<div class="t" style="left:447px;top:371.20px;width:30px;text-align:right;font-size:9.8px;line-height:12px;color:#484848">131</div>
<div class="t" style="left:447px;top:392.45px;width:30px;text-align:right;font-size:9.8px;line-height:12px;color:#484848">132</div>
<div class="t" style="left:447px;top:413.70px;width:30px;text-align:right;font-size:9.8px;line-height:12px;color:#484848">133</div>
<div class="t" style="left:447px;top:434.95px;width:30px;text-align:right;font-size:9.8px;line-height:12px;color:#484848">134</div>
<div class="t" style="left:499.5px;top:74px;font-size:9.8px;line-height:12px;color:#6a9955;font-weight:bold">*/</div>
<div class="t" style="left:493.3px;top:94.6px;font-size:9.8px;line-height:12px;color:#d8d890">as</div>
<!-- find widget -->
<div class="a" style="left:978.5px;top:76px;width:277.7px;height:21.5px;background:#2f2f2f;box-shadow:0 1px 4px rgba(0,0,0,0.5);border-left:2px solid #3c3c3c"></div>
<div class="a" style="left:991.5px;top:78px;width:142.5px;height:15.5px;background:#383838"></div>
<svg style="left:970px;top:72px" width="300" height="26" viewBox="0 0 300 26">
 <path d="M15.6,12.8 L18.2,15.4 L15.6,18" stroke="#c0c0c0" stroke-width="0.9" fill="none"/>
 <path d="M221,18.5 L221,9.5 M217.6,12.8 L221,9.4 L224.4,12.8 M238,9.5 L238,18.5 M234.6,15.2 L238,18.6 L241.4,15.2" stroke="#8a8a8a" stroke-width="0.9" fill="none"/>
 <path d="M251.5,10.6 L261,10.6 M251.5,13.4 L261,13.4 M251.5,16.2 L257,16.2" stroke="#c0c0c0" stroke-width="0.9" fill="none"/>
 <path d="M272.8,11.2 L278.4,16.8 M278.4,11.2 L272.8,16.8" stroke="#d0d0d0" stroke-width="1.1"/>
 <path d="M136,18.6 L147.4,18.6" stroke="#c0c0c0" stroke-width="0.7"/>
 <rect x="152" y="14.6" width="2.4" height="2.4" fill="#c0c0c0"/>
 <path d="M157.5,8.4 L157.5,13.2 M155.4,9.6 L159.6,12 M159.6,9.6 L155.4,12" stroke="#c0c0c0" stroke-width="0.8"/>
</svg>
<div class="t" style="left:997px;top:80.5px;font-size:8.65px;line-height:12px;color:#d0d0d0">initDb.run</div>
<div class="t" style="left:1092.5px;top:80px;font-size:7.2px;line-height:12px;color:#c0c0c0">Aa</div>
<div class="t" style="left:1106px;top:79.8px;font-size:7.6px;line-height:12px;color:#c0c0c0">ab</div>
<div class="t" style="left:1138px;top:80.5px;font-size:7.8px;line-height:12px;color:#f0715a">无结果</div>
<div class="a" style="left:1265.2px;top:76px;width:0.8px;height:21px;background:#3a3a3a"></div>
<!-- panel -->
<div class="a" style="left:458px;top:451px;width:44px;height:246px;background:#262626;overflow:hidden">
 <div class="a" style="left:0;top:0;width:43px;height:0.8px;background:#3a3a3a"></div>
 <div class="a" style="left:0;top:0.8px;width:43px;height:22.2px;background:#2b2b2b"></div>
 <div class="t" style="left:14px;top:6.4px;font-size:7.2px;line-height:12px;color:#c8c8c8">构建</div>
 <div class="a" style="left:35.4px;top:6.3px;width:14px;height:11px;border-radius:5.5px;background:#4a4a4a"></div>
 <div class="t" style="left:38.5px;top:5.8px;font-size:7px;line-height:12px;color:#e0e0e0;font-weight:bold">1</div>
 <div class="a" style="left:0;top:23px;width:43px;height:0.8px;background:#363636"></div>
 <div class="a" style="left:23.5px;top:24px;width:0.7px;height:15.8px;background:#363636"></div>
 <div class="t" style="left:35.5px;top:26.2px;font-size:7.6px;line-height:12px;color:#d8d8d8;font-weight:bold">W</div>
 <div class="a" style="left:0;top:39.8px;width:43px;height:0.8px;background:#363636"></div>
 <svg style="left:0;top:0" width="43" height="60">
  <path d="M11.5,36 L8,36 L8,27.5 L16,27.5 L16,31" stroke="#a0a0a0" stroke-width="0.8" fill="none"/>
  <path d="M11.5,31 L11.5,37.2 L13,35.4 L15,37.6 L16,36.8 L14.2,34.6 L16.2,33.6 Z" fill="#b8b8b8"/>
  <rect x="6.5" y="45.2" width="9.6" height="8.8" stroke="#a8a8a8" stroke-width="0.8" fill="none"/>
  <path d="M9.2,45.2 L9.2,54" stroke="#a8a8a8" stroke-width="0.8"/>
  <path d="M11.2,47.4 L14,49.6 L11.2,51.8 Z" fill="#a8a8a8"/>
  <circle cx="30.5" cy="49.6" r="4" stroke="#a8a8a8" stroke-width="0.9" fill="none"/>
  <path d="M27.7,46.8 L33.3,52.4" stroke="#a8a8a8" stroke-width="0.9"/>
 </svg>
 <div class="a" style="left:0;top:57.6px;width:43px;height:14.0px;background:#332b05;border-top:0.8px solid #5a4b12"></div>
 <svg style="left:5px;top:61.2px" width="9" height="8"><path d="M4.3,0.8 L8,7.2 L0.6,7.2 Z" fill="#f2c43a"/></svg>
 <div class="m" style="left:18px;top:58.9px;color:#f2dd9a">[基础库</div>
 <div class="a" style="left:0;top:71.6px;width:43px;height:14.0px;background:#262626;border-top:0.8px solid #383838"></div>
 <div class="m" style="left:17.5px;top:72.9px;color:#d4d4d4">[system</div>
 <div class="a" style="left:0;top:85.6px;width:43px;height:14.0px;background:#332b05;border-top:0.8px solid #5a4b12"></div>
 <svg style="left:5px;top:89.2px" width="9" height="8"><path d="M4.3,0.8 L8,7.2 L0.6,7.2 Z" fill="#f2c43a"/></svg>
 <div class="m" style="left:18px;top:86.9px;color:#f2dd9a">[自动热</div>
 <div class="a" style="left:0;top:99.6px;width:43px;height:23.0px;background:#332b05;border-top:0.8px solid #5a4b12"></div>
 <svg style="left:5px;top:103.2px" width="9" height="8"><path d="M4.3,0.8 L8,7.2 L0.6,7.2 Z" fill="#f2c43a"/></svg>
 <div class="m" style="left:18px;top:100.9px;color:#f2dd9a">[Depre</div>
 <div class="m" style="left:18px;top:111.7px;color:#e8dcb0">detail</div>
 <div class="a" style="left:0;top:122.6px;width:43px;height:13.4px;background:#262626;border-top:0.8px solid #383838"></div>
 <div class="m" style="left:17.5px;top:123.9px;color:#d4d4d4">initDb</div>
 <div class="a" style="left:0;top:136.0px;width:43px;height:13.0px;background:#332b05;border-top:0.8px solid #5a4b12"></div>
 <svg style="left:5px;top:139.6px" width="9" height="8"><path d="M4.3,0.8 L8,7.2 L0.6,7.2 Z" fill="#f2c43a"/></svg>
 <div class="m" style="left:18px;top:137.3px;color:#f2dd9a">[自动热</div>
 <div class="a" style="left:0;top:149.0px;width:43px;height:59.5px;background:#2a0202;border-top:0.8px solid #5c1010"></div>
 <svg style="left:5px;top:152.0px" width="8" height="8"><circle cx="3.8" cy="4" r="3.4" fill="#e45a5a"/><path d="M2.4,2.6 L5.2,5.4 M5.2,2.6 L2.4,5.4" stroke="#fff" stroke-width="0.8"/></svg>
 <div class="m" style="left:17px;top:150.6px;color:#f08a8a">Error:</div>
 <div class="m" style="left:34.6px;top:160.3px;color:#f08a8a">at</div>
 <div class="m" style="left:34.6px;top:169.8px;color:#f08a8a">at</div>
 <div class="m" style="left:34.6px;top:179.3px;color:#f08a8a">at</div>
 <div class="m" style="left:34.6px;top:188.8px;color:#f08a8a">at</div>
 <div class="m" style="left:17.5px;top:198.3px;color:#f08a8a">(env:</div>
 <div class="a" style="left:0;top:208.5px;width:43px;height:12.0px;background:#332b05;border-top:0.8px solid #5a4b12"></div>
 <svg style="left:5px;top:211.3px" width="9" height="8"><path d="M4.3,0.8 L8,7.2 L0.6,7.2 Z" fill="#f2c43a"/></svg>
 <svg style="left:18.5px;top:211.8px" width="5" height="6"><path d="M0.5,0.5 L4,3 L0.5,5.5 Z" fill="#aaa"/></svg>
 <div class="m" style="left:24px;top:208.8px;color:#f2dd9a">[work</div>
 <div class="a" style="left:0;top:220.5px;width:43px;height:0.8px;background:#5a4b12"></div>
 <div class="a" style="left:0;top:221.3px;width:43px;height:25px;background:#242424"></div>
 <svg style="left:6px;top:226px" width="6" height="8"><path d="M1,1 L4,4 L1,7" stroke="#4a8fe0" stroke-width="0.9" fill="none"/></svg>
</div>


<!-- CLOUD CONSOLE WINDOW -->
<div class="a" style="left:501.7px;top:97px;width:774px;height:620px;background:#2f2f2e;border-radius:3px 0 0 0;box-shadow:-1px 0 3px rgba(0,0,0,0.4)"></div>
<div class="a" style="left:501.7px;top:97px;width:774px;height:20px;border-radius:3px 0 0 0;background:linear-gradient(#e6e8eb,#e3e5e9 70%,#eaebed)"></div>
<svg style="left:506px;top:100px" width="12" height="12"><circle cx="5.8" cy="5.6" r="4.4" fill="#e2ece4" stroke="#cfe0d2" stroke-width="0.6"/><path d="M4.2,4.6 L5.8,7 L7.4,4.6" stroke="#6cb887" stroke-width="0.9" fill="none"/></svg>
<div class="t" style="left:518.5px;top:101px;font-size:8.15px;letter-spacing:0.16px;line-height:12px;color:#2a2a2a">云开发控制台 v1.6.46（当前环境 cloud1-2gamg3zp14ffed33)</div>
<svg style="left:1210px;top:98px" width="60" height="18"><path d="M9,8.6 L16.4,8.6" stroke="#222" stroke-width="1.1"/><rect x="40.2" y="5.2" width="6.8" height="6.8" stroke="#333" stroke-width="0.9" fill="none"/></svg>
<div class="a" style="left:501.7px;top:117px;width:774px;height:40px;background:linear-gradient(#4d4d4d,#484848 25%,#464646)"></div>
<div class="a" style="left:501.7px;top:157px;width:774px;height:0.8px;background:#3a3a3a"></div>
<div class="a" style="left:522.0px;top:125px;width:26.5px;height:15px;border-radius:2px;background:#676767"></div>
<div class="a" style="left:572.0px;top:125px;width:26.5px;height:15px;border-radius:2px;background:#676767"></div>
<div class="a" style="left:621.5px;top:125px;width:26.5px;height:15px;border-radius:2px;background:#676767"></div>
<div class="a" style="left:671.0px;top:125px;width:26.5px;height:15px;border-radius:2px;background:#676767"></div>
<div class="a" style="left:1153.0px;top:125px;width:26.5px;height:15px;border-radius:2px;background:#676767"></div>
<div class="a" style="left:1203.0px;top:125px;width:26.5px;height:15px;border-radius:2px;background:#676767"></div>
<div class="a" style="left:1252.5px;top:125px;width:26.5px;height:15px;border-radius:2px;background:#676767"></div>
<div class="a" style="left:501.7px;top:157.8px;width:106.3px;height:560px;background:#393939"></div>
<div class="a" style="left:505px;top:159px;width:100px;height:21.5px;background:#474747"></div>
<div class="a" style="left:1231px;top:170px;width:50px;height:14.5px;border-radius:3px;background:#717171"></div>
<div class="a" style="left:622px;top:204px;width:660px;height:99px;border-radius:2px;background:#3a3a3a;box-shadow:0 0 1px rgba(0,0,0,0.4)"></div>
<div class="a" style="left:622px;top:316px;width:660px;height:192px;border-radius:2px;background:#3a3a3a;box-shadow:0 0 1px rgba(0,0,0,0.4)"></div>
<div class="a" style="left:632px;top:348px;width:650px;height:140px;background:#434343"></div>
<svg style="left:942.5px;top:235.3px" width="22" height="22" viewBox="-11 -11 22 22">
<rect x="-1.3" y="-10" width="2.6" height="4.6" rx="1.3" fill="#c4c4c4" opacity="0.18" transform="rotate(0)"/><rect x="-1.3" y="-10" width="2.6" height="4.6" rx="1.3" fill="#c4c4c4" opacity="0.27" transform="rotate(30)"/><rect x="-1.3" y="-10" width="2.6" height="4.6" rx="1.3" fill="#c4c4c4" opacity="0.36" transform="rotate(60)"/><rect x="-1.3" y="-10" width="2.6" height="4.6" rx="1.3" fill="#c4c4c4" opacity="0.45" transform="rotate(90)"/><rect x="-1.3" y="-10" width="2.6" height="4.6" rx="1.3" fill="#c4c4c4" opacity="0.55" transform="rotate(120)"/><rect x="-1.3" y="-10" width="2.6" height="4.6" rx="1.3" fill="#c4c4c4" opacity="0.64" transform="rotate(150)"/><rect x="-1.3" y="-10" width="2.6" height="4.6" rx="1.3" fill="#c4c4c4" opacity="0.73" transform="rotate(180)"/><rect x="-1.3" y="-10" width="2.6" height="4.6" rx="1.3" fill="#c4c4c4" opacity="0.82" transform="rotate(210)"/><rect x="-1.3" y="-10" width="2.6" height="4.6" rx="1.3" fill="#c4c4c4" opacity="0.91" transform="rotate(240)"/><rect x="-1.3" y="-10" width="2.6" height="4.6" rx="1.3" fill="#c4c4c4" opacity="1.00" transform="rotate(270)"/><rect x="-1.3" y="-10" width="2.6" height="4.6" rx="1.3" fill="#c4c4c4" opacity="0.10" transform="rotate(300)"/><rect x="-1.3" y="-10" width="2.6" height="4.6" rx="1.3" fill="#c4c4c4" opacity="0.10" transform="rotate(330)"/>
</svg>
<div class="t" style="left:903.5px;top:267px;width:100px;text-align:center;font-size:10.5px;line-height:14px;color:#8e8e8e">加载权限</div>
<svg style="left:578px;top:153px" width="14" height="16" viewBox="0 0 14 16"><path d="M2,2 L2,12.2 L4.6,9.8 L6.6,13.6 L8.2,12.8 L6.3,9.2 L9.6,9.2 Z" fill="#fff" stroke="#111" stroke-width="0.8" stroke-linejoin="round"/></svg>
<!-- watermark -->
<div class="a" style="left:1181.6px;top:658.8px;width:34px;height:34px;border-radius:50%;background:radial-gradient(circle at 50% 60%,#a8dcf8,#7cc4f0);border:2px solid #f2f6fa;overflow:hidden"><div class="a" style="left:4px;top:-6px;width:22px;height:10px;border-radius:50%;background:#2b8ae6"></div></div>
<div class="t" style="left:1181.6px;top:669.5px;width:34px;text-align:center;font-size:8px;line-height:12px;color:#eaf6ff">05:19</div>
<div class="t" style="left:1079px;top:683px;font-family:'Liberation Serif',serif;font-style:italic;font-weight:bold;font-size:17.5px;line-height:20px;color:#ff0a0a;transform:scaleX(1.315);transform-origin:0 0">www.java1234.com</div>
</div></body></html>
